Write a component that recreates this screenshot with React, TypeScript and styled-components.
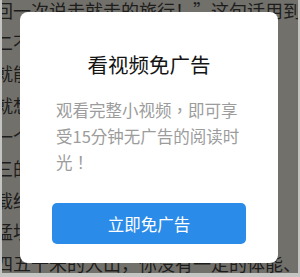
import React from "react";
import styled, { createGlobalStyle } from "styled-components";

const Global = createGlobalStyle`
  html, body { margin: 0; padding: 0; }
  body {
    width: 300px;
    height: 277px;
    overflow: hidden;
    font-family: "Noto Sans CJK SC", "Noto Sans", sans-serif;
  }
`;

const Frame = styled.div`
  position: relative;
  width: 300px;
  height: 277px;
  box-sizing: border-box;
  background: #c4c4c2;
  padding: 0 2px 4px 2px;
  overflow: hidden;
`;

const Page = styled.div`
  position: relative;
  width: 100%;
  height: 100%;
  background: #72706b;
  overflow: hidden;
`;

const Lines = styled.div`
  display: flex;
  flex-direction: column;
  margin: -5px 0 0 -7px;
  font-size: 18px;
  line-height: 31.6px;
  color: #1d1d1c;
  white-space: nowrap;
`;

const Line = styled.div`
  margin: 0;
`;

const Modal = styled.div`
  position: absolute;
  left: 20px;
  top: 12px;
  width: 258px;
  height: 251px;
  box-sizing: border-box;
  background: #ffffff;
  border-radius: 8px;
  display: flex;
  flex-direction: column;
  align-items: center;
  padding: 38px 0 19px;
`;

const Title = styled.div`
  font-size: 20.5px;
  line-height: 28px;
  color: #141414;
  text-align: center;
`;

const Body = styled.p`
  margin: 19px 0 0 36px;
  width: 186px;
  font-family: "Noto Sans CJK TC", "Noto Sans CJK SC", sans-serif;
  font-size: 16.5px;
  line-height: 26px;
  color: #9c9c9c;
  text-align: left;
  align-self: flex-start;
`;

const Button = styled.button`
  margin-top: auto;
  width: 194px;
  height: 41px;
  border: none;
  border-radius: 5px;
  background: #2b8be8;
  color: #ffffff;
  font-family: inherit;
  font-size: 16.5px;
  display: flex;
  align-items: center;
  justify-content: center;
  padding: 0;
`;

const bgLines = [
  "回一次说走就走的旅行！”这句话用到了",
  "二不是每个人都能说走就走的，即",
  "就能去看想去的地方，也不是，即",
  "就想出发就能出发，并不是这么",
  "一个人的旅行需要的不只是一",
  "三的准备，我们需要的是一二",
  "载结束了所有的旅途之后，公！",
  "猛坝子上海拔很高的地方，拔",
  "四五千米的大山，你没有一定的体能、",
];

export default function App() {
  return (
    <>
      <Global />
      <Frame>
        <Page>
          <Lines>
            {bgLines.map((t, i) => (
              <Line key={i}>{t}</Line>
            ))}
          </Lines>
        </Page>
        <Modal>
          <Title>看视频免广告</Title>
          <Body>观看完整小视频，即可享受15分钟无广告的阅读时光！</Body>
          <Button>立即免广告</Button>
        </Modal>
      </Frame>
    </>
  );
}
